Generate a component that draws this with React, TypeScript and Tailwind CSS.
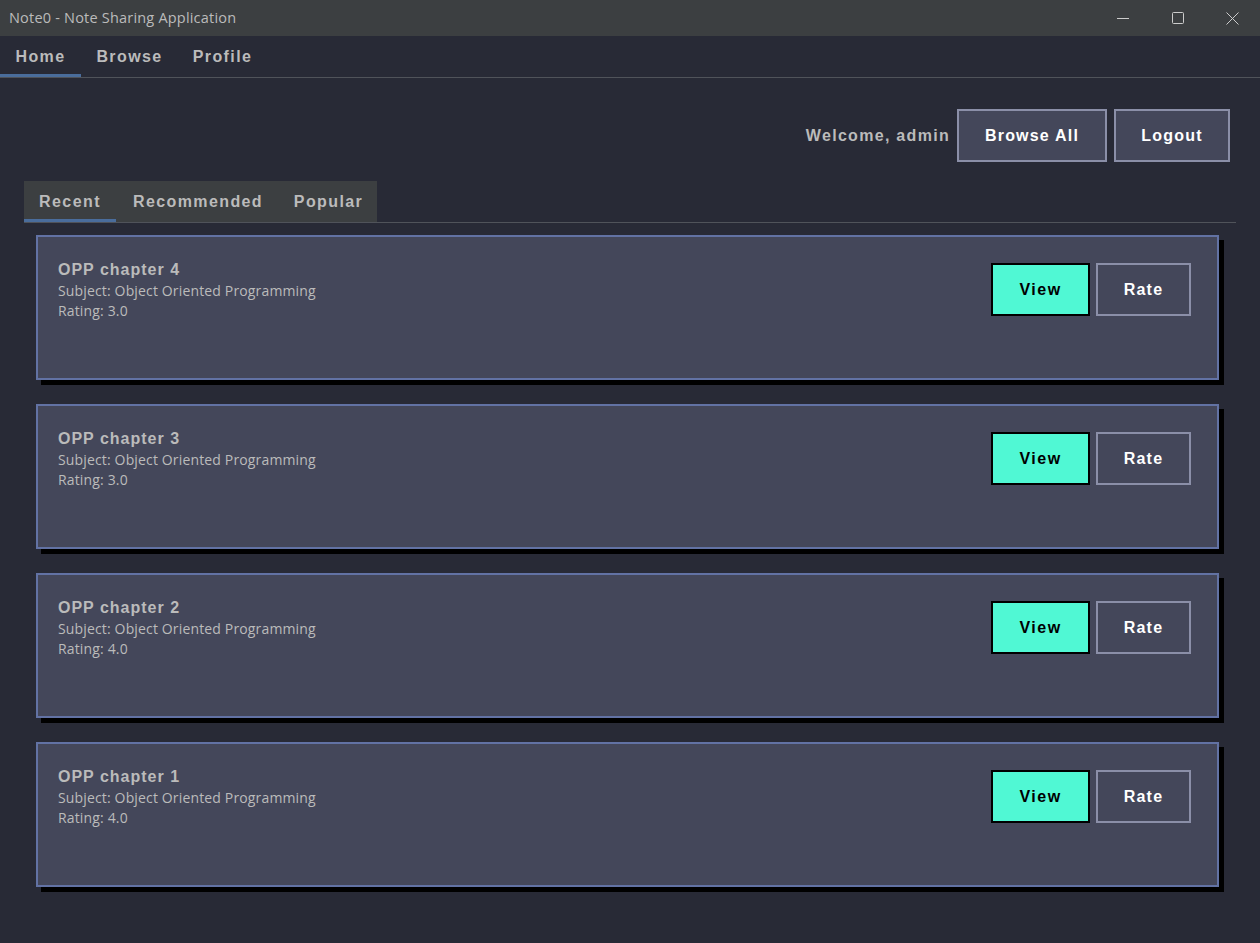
import React, { useState } from 'react';

interface Note {
  id: number;
  title: string;
  subject: string;
  rating: string;
}

const notes: Note[] = [
  { id: 4, title: 'OPP chapter 4', subject: 'Object Oriented Programming', rating: '3.0' },
  { id: 3, title: 'OPP chapter 3', subject: 'Object Oriented Programming', rating: '3.0' },
  { id: 2, title: 'OPP chapter 2', subject: 'Object Oriented Programming', rating: '4.0' },
  { id: 1, title: 'OPP chapter 1', subject: 'Object Oriented Programming', rating: '4.0' },
];

const boldFont = { fontFamily: '"Liberation Sans", Arial, sans-serif' };
const bodyFont = { fontFamily: '"Open Sans", "Noto Sans", sans-serif' };

const TitleBar: React.FC = () => (
  <div className="h-[36px] bg-[#3c3f41] flex items-center justify-between shrink-0">
    <span className="pl-[9px] text-[14.5px] tracking-[0.2px] text-[#bbbbbb]" style={bodyFont}>
      Note0 - Note Sharing Application
    </span>
    <div className="flex h-full items-center text-[#cccccc]">
      <div className="w-[55px] h-full flex items-center justify-center">
        <svg width="12" height="12" viewBox="0 0 12 12">
          <line x1="0" y1="6.5" x2="12" y2="6.5" stroke="currentColor" strokeWidth="1" />
        </svg>
      </div>
      <div className="w-[55px] h-full flex items-center justify-center">
        <svg width="12" height="12" viewBox="0 0 12 12">
          <rect x="0.5" y="0.5" width="11" height="11" rx="1" fill="none" stroke="currentColor" strokeWidth="1" />
        </svg>
      </div>
      <div className="w-[55px] h-full flex items-center justify-center">
        <svg width="13" height="13" viewBox="0 0 13 13">
          <path d="M0.5 0.5 L12.5 12.5 M12.5 0.5 L0.5 12.5" stroke="currentColor" strokeWidth="1" />
        </svg>
      </div>
    </div>
  </div>
);

const App: React.FC = () => {
  const [menu, setMenu] = useState('Home');
  const [tab, setTab] = useState('Recent');

  const menus = [
    { name: 'Home', w: 'w-[81px]' },
    { name: 'Browse', w: 'w-[97px]' },
    { name: 'Profile', w: 'w-[89px]' },
  ];
  const tabs = [
    { name: 'Recent', w: 'w-[92px]' },
    { name: 'Recommended', w: 'w-[164px]' },
    { name: 'Popular', w: 'w-[97px]' },
  ];

  return (
    <div className="w-[1260px] h-[943px] bg-[#282a36] flex flex-col overflow-hidden" style={boldFont}>
      <TitleBar />

      {/* top menu */}
      <div className="h-[42px] flex border-b border-[#50535a] shrink-0">
        {menus.map(m => (
          <button
            key={m.name}
            onClick={() => setMenu(m.name)}
            className={`${m.w} h-full flex items-center justify-center pt-[4px] text-[16px] font-bold tracking-[1.4px] text-[#bbbbbb] border-b-[3px] ${
              menu === m.name ? 'border-[#4a6d9c]' : 'border-transparent'
            }`}
          >
            {m.name}
          </button>
        ))}
      </div>

      <div className="flex-1 flex flex-col px-[24px]">
        {/* welcome row */}
        <div className="flex items-center justify-end gap-[7px] pt-[31px] pr-[6px]">
          <span className="text-[16px] font-bold tracking-[1.3px] text-[#bbbbbb] pt-[1px]">Welcome, admin</span>
          <button className="w-[150px] h-[53px] bg-[#44475a] border-2 border-[#8b8fa8] text-white text-[16px] font-bold tracking-[1.2px] pt-[1px]">
            Browse All
          </button>
          <button className="w-[116px] h-[53px] bg-[#44475a] border-2 border-[#8b8fa8] text-white text-[16px] font-bold tracking-[1.2px] pt-[1px]">
            Logout
          </button>
        </div>

        {/* sub tabs */}
        <div className="mt-[19px] flex border-b border-[#50535a]">
          <div className="flex bg-[#3c3f41]">
            {tabs.map(t => (
              <button
                key={t.name}
                onClick={() => setTab(t.name)}
                className={`${t.w} h-[41px] flex items-center justify-center pt-[4px] text-[16px] font-bold tracking-[1.4px] text-[#bbbbbb] border-b-[3px] ${
                  tab === t.name ? 'border-[#4a6d9c]' : 'border-transparent'
                }`}
              >
                {t.name}
              </button>
            ))}
          </div>
        </div>

        {/* notes list */}
        <div className="flex flex-col gap-[24px] pt-[12px] px-[12px]">
          {notes.map(note => (
            <div
              key={note.id}
              className="h-[145px] w-[1183px] bg-[#44475a] border-2 border-[#6272a4] shadow-[5px_5px_0_#000] flex justify-between items-start pl-[20px] pr-[26px] pt-[23px]"
            >
              <div className="flex flex-col text-[#bbbbbb]">
                <span className="text-[16px] leading-[20px] font-bold tracking-[1px]">{note.title}</span>
                <span className="text-[14px] leading-[20px] mt-[1px] tracking-[0.15px]" style={bodyFont}>
                  Subject: {note.subject}
                </span>
                <span className="text-[14px] leading-[20px] tracking-[0.15px]" style={bodyFont}>
                  Rating: {note.rating}
                </span>
              </div>
              <div className="flex gap-[6px] mt-[3px]">
                <button className="w-[99px] h-[53px] bg-[#50f8d4] border-2 border-black text-black text-[16px] font-bold tracking-[1.5px] pt-[1px]">
                  View
                </button>
                <button className="w-[95px] h-[53px] bg-[#44475a] border-2 border-[#8b8fa8] text-white text-[16px] font-bold tracking-[1.2px] pt-[1px]">
                  Rate
                </button>
              </div>
            </div>
          ))}
        </div>
      </div>
    </div>
  );
};

export default App;
